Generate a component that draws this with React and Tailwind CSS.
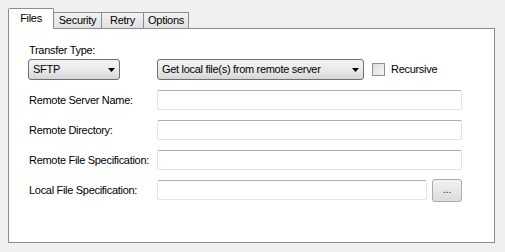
import React from 'react';

const font = { fontFamily: '"Liberation Sans", Arial, sans-serif' };

const Tab = ({ label, active, width }) =>
  active ? (
    <div
      className={`relative z-10 -mb-px h-[21px] ${width} border border-b-0 border-[#898c95] bg-white text-center leading-[19px] rounded-t-[2px]`}
    >
      {label}
    </div>
  ) : (
    <div
      className={`h-[16px] ${width} border border-b-0 border-l-0 border-[#898c95] bg-gradient-to-b from-[#f3f3f3] to-[#e1e1e1] text-center leading-[15px] first:border-l`}
    >
      {label}
    </div>
  );

const Combo = ({ value, width }) => (
  <div
    className={`relative flex h-[21px] ${width} items-center rounded-[3px] border border-[#707070] bg-gradient-to-b from-[#f2f2f2] via-[#ebebeb] to-[#d6d6d6] pl-[4px]`}
  >
    <span className="leading-none">{value}</span>
    <svg className="absolute right-[4px] top-[8px]" width="7" height="4" viewBox="0 0 7 4">
      <path d="M0 0H7L3.5 4Z" fill="#000" />
    </svg>
  </div>
);

const TextInput = ({ width }) => (
  <div
    className={`h-[20px] ${width} rounded-[2px] border border-[#e2e3ea] border-t-[#abadb3] bg-white`}
  />
);

const Row = ({ label, children }) => (
  <div className="flex h-[20px] items-center">
    <div className="w-[129px] shrink-0 pl-px">{label}</div>
    {children}
  </div>
);

export default function App() {
  return (
    <div
      className="h-[252px] w-[505px] bg-[#f0f0f0] pl-[8px] pt-[8px] text-[11px] tracking-[-0.3px] text-black"
      style={font}
    >
      <div className="flex items-end">
        <Tab label="Files" active width="w-[46px]" />
        <Tab label="Security" width="w-[48px]" />
        <Tab label="Retry" width="w-[42px]" />
        <Tab label="Options" width="w-[45px]" />
      </div>

      <div className="h-[215px] w-[487px] border border-[#898c95] bg-white pl-[19px] pt-[13px]">
        <div className="h-[17px] pl-px leading-[16px]">Transfer Type:</div>

        <div className="flex h-[21px] items-center">
          <Combo value="SFTP" width="w-[92px]" />
          <div className="ml-[37px]">
            <Combo value="Get local file(s) from remote server" width="w-[207px]" />
          </div>
          <div className="ml-[8px] h-[13px] w-[13px] border border-[#8e8f8f] bg-gradient-to-br from-[#dcdcdc] to-[#f6f6f6]" />
          <span className="ml-[6px]">Recursive</span>
        </div>

        <div className="mt-[10px] flex flex-col gap-[10px]">
          <Row label="Remote Server Name:">
            <TextInput width="w-[305px]" />
          </Row>
          <Row label="Remote Directory:">
            <TextInput width="w-[305px]" />
          </Row>
          <Row label="Remote File Specification:">
            <TextInput width="w-[305px]" />
          </Row>
          <Row label="Local File Specification:">
            <TextInput width="w-[270px]" />
            <button className="ml-[5px] flex h-[23px] w-[30px] items-center justify-center rounded-[3px] border border-[#acacac] bg-gradient-to-b from-[#f2f2f2] to-[#dcdcdc] pb-[2px] text-[#1a1a8c]">
              ...
            </button>
          </Row>
        </div>
      </div>
    </div>
  );
}
